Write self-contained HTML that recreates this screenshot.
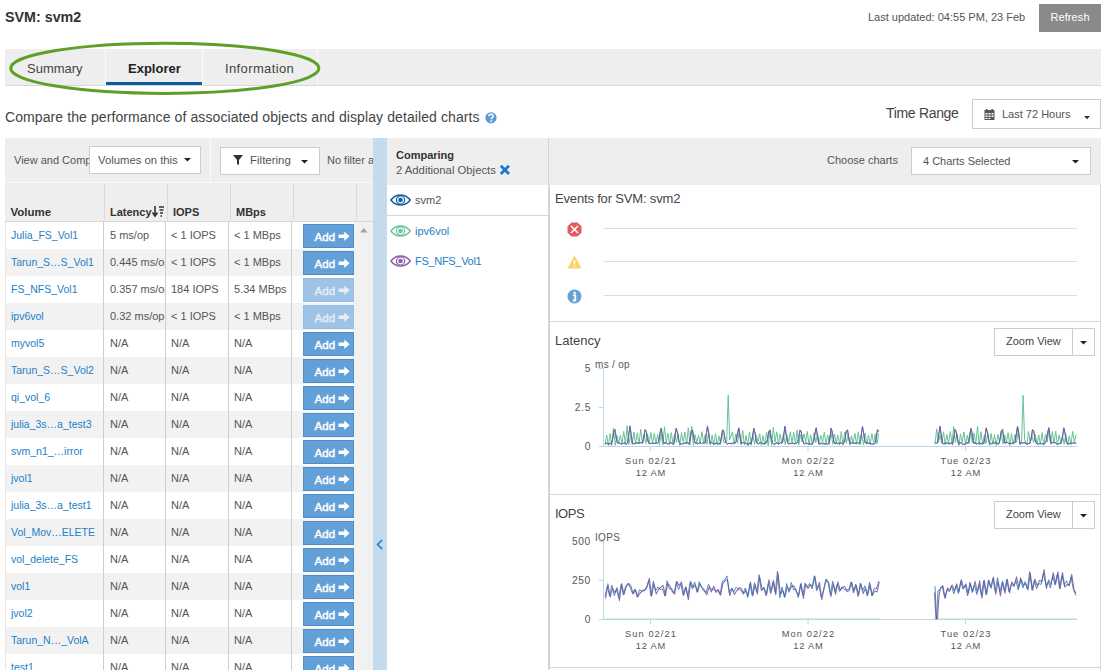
<!DOCTYPE html>
<html><head><meta charset="utf-8">
<style>
*{box-sizing:border-box;margin:0;padding:0}
html,body{width:1105px;height:670px;overflow:hidden;background:#fff;font-family:"Liberation Sans",sans-serif;color:#444;position:relative}
.a{position:absolute;white-space:nowrap}
.t{line-height:1}
.lk{color:#217fc6}
.btn{position:absolute;width:51px;height:24px;background:#62a0d7;border:1px solid #4f8dc8;color:#fff;font-size:11.5px;font-weight:normal;-webkit-text-stroke:0.45px #fff;line-height:25px;padding-left:10.5px;letter-spacing:0.1px}
.btn.d{background:#9fc3e6;border-color:#98bde2;color:#e3eef8;-webkit-text-stroke:0.45px #e3eef8}
.arr{position:absolute;left:33.5px;top:5.5px}
</style></head><body>

<div class="a t" style="left:5px;top:10px;font-size:14.3px;font-weight:bold;color:#333">SVM: svm2</div>
<div class="a t" style="left:868px;top:12px;font-size:11px;color:#555">Last updated: 04:55 PM, 23 Feb</div>
<div class="a" style="left:1039px;top:4px;width:62px;height:28px;background:#8a8a8a;color:#fff;font-size:11px;line-height:26px;text-align:center;letter-spacing:0.1px">Refresh</div>

<div class="a" style="left:5px;top:49px;width:1096px;height:37px;background:#eeeeee;border-bottom:1px solid #d8d8d8"></div>
<div class="a" style="left:105px;top:49px;width:1px;height:36px;background:#fafafa"></div>
<div class="a" style="left:202px;top:49px;width:1px;height:36px;background:#fafafa"></div>
<div class="a" style="left:317px;top:49px;width:1px;height:36px;background:#fafafa"></div>
<div class="a" style="left:106px;top:82px;width:96px;height:3px;background:#0d5c9e"></div>
<div class="a t" style="left:27px;top:62px;font-size:13px;color:#444">Summary</div>
<div class="a t" style="left:128px;top:62px;font-size:13px;font-weight:bold;color:#222">Explorer</div>
<div class="a t" style="left:225px;top:62px;font-size:13px;letter-spacing:0.38px;color:#444">Information</div>
<svg class="a" style="left:0;top:0;z-index:5" width="340" height="110"><ellipse cx="164.8" cy="68.3" rx="154.1" ry="25.1" fill="none" stroke="#5e9f28" stroke-width="3"/></svg>

<div class="a t" style="left:5px;top:110px;font-size:14px;letter-spacing:0.095px;color:#444">Compare the performance of associated objects and display detailed charts</div>
<svg class="a" style="left:484.5px;top:112px" width="12" height="12"><circle cx="6" cy="5.8" r="5.6" fill="#5b9bd5"/><path d="M3.9 4.3C3.9 2.9 4.8 2.2 6 2.2C7.3 2.2 8.1 3 8.1 4C8.1 5.4 6.3 5.5 6.3 7.2" fill="none" stroke="#fff" stroke-width="1.5"/><rect x="5.4" y="8.3" width="1.7" height="1.6" fill="#fff"/></svg>
<div class="a t" style="left:886px;top:105.5px;font-size:14px;letter-spacing:-0.32px;color:#444">Time Range</div>
<div class="a" style="left:972px;top:99px;width:129px;height:30px;border:1px solid #ccc;background:#fff"></div>
<svg class="a" style="left:984px;top:109px" width="11" height="11"><rect x="0.5" y="1" width="10" height="10" fill="#555"/><rect x="2" y="0" width="1.5" height="2" fill="#555"/><rect x="7.5" y="0" width="1.5" height="2" fill="#555"/><g fill="#fff"><rect x="1.5" y="4" width="2" height="1.5"/><rect x="4.5" y="4" width="2" height="1.5"/><rect x="7.5" y="4" width="2" height="1.5"/><rect x="1.5" y="6.5" width="2" height="1.5"/><rect x="4.5" y="6.5" width="2" height="1.5"/><rect x="7.5" y="6.5" width="2" height="1.5"/><rect x="1.5" y="9" width="2" height="1"/><rect x="4.5" y="9" width="2" height="1"/></g></svg>
<div class="a t" style="left:1002px;top:109px;font-size:11px;color:#555">Last 72 Hours</div>
<svg class="a" style="left:1083.5px;top:115.5px" width="6" height="4"><path d="M0 0H6L3 3.2Z" fill="#333"/></svg>

<div class="a" style="left:5px;top:138px;width:368px;height:45px;background:#eeeeee"></div>
<div class="a" style="left:210px;top:138px;width:1px;height:44px;background:#fafafa"></div>
<div class="a" style="left:5px;top:182px;width:368px;height:1px;background:#fafafa"></div>
<div class="a t" style="left:14px;top:155px;font-size:11px;color:#555;width:75px;overflow:hidden">View and Comp</div>
<div class="a" style="left:89px;top:146px;width:112px;height:28px;background:#fff;border:1px solid #ccc"></div>
<div class="a t" style="left:98px;top:155px;font-size:11.3px;color:#555;width:80px;overflow:hidden">Volumes on this</div>
<svg class="a" style="left:184px;top:158px" width="7" height="4"><path d="M0 0H7L3.5 3.5Z" fill="#222"/></svg>
<div class="a" style="left:220px;top:147px;width:100px;height:28px;background:#fff;border:1px solid #ccc"></div>
<svg class="a" style="left:233px;top:155px" width="10" height="10"><path d="M0 0H10L6 5V10L4 9V5Z" fill="#333"/></svg>
<div class="a t" style="left:250px;top:155px;font-size:11.5px;color:#555">Filtering</div>
<svg class="a" style="left:301px;top:160px" width="7" height="4"><path d="M0 0H7L3.5 3.5Z" fill="#222"/></svg>
<div class="a t" style="left:327px;top:155px;font-size:11px;color:#555;width:46px;overflow:hidden">No filter applied</div>

<div class="a" style="left:5px;top:183px;width:368px;height:39px;background:#eeeeee;border-bottom:1px solid #d6d6d6"></div>
<div class="a" style="left:104px;top:183px;width:1px;height:37px;background:#d9d9d9"></div>
<div class="a" style="left:167px;top:183px;width:1px;height:37px;background:#d9d9d9"></div>
<div class="a" style="left:230px;top:183px;width:1px;height:37px;background:#d9d9d9"></div>
<div class="a" style="left:293px;top:183px;width:1px;height:37px;background:#d9d9d9"></div>
<div class="a" style="left:356px;top:183px;width:1px;height:37px;background:#d9d9d9"></div>
<div class="a t" style="left:10.5px;top:207px;font-size:11.5px;font-weight:bold;color:#333">Volume</div>
<div class="a t" style="left:110px;top:207px;font-size:11px;font-weight:bold;color:#333">Latency</div>
<svg class="a" style="left:152px;top:206px" width="12" height="12"><path d="M3 0V9M0.5 6.5L3 10L5.5 6.5" stroke="#333" stroke-width="1.6" fill="none"/><path d="M7 1H12M7.5 4H11.5M8 7H11M8.5 10H10" stroke="#333" stroke-width="1.4"/></svg>
<div class="a t" style="left:173px;top:207px;font-size:11px;font-weight:bold;color:#333">IOPS</div>
<div class="a t" style="left:236px;top:207px;font-size:11px;font-weight:bold;color:#333">MBps</div>

<div class="a" style="left:354px;top:222px;width:19px;height:448px;background:#f1f1f1"></div>
<svg class="a" style="left:360px;top:228px" width="8" height="5"><path d="M0 4.5H7.5L3.75 0Z" fill="#a3a3a3"/></svg>
<div class="a" style="left:5px;top:222px;width:349px;height:27px;background:#ffffff"></div>
<div class="a t lk" style="left:11px;top:230px;font-size:10.5px">Julia_FS_Vol1</div>
<div class="a t" style="left:110px;top:230px;font-size:11px;color:#555;width:55px;overflow:hidden">5 ms/op</div>
<div class="a t" style="left:171px;top:230px;font-size:11px;color:#555">&lt; 1 IOPS</div>
<div class="a t" style="left:234px;top:230px;font-size:11px;color:#555">&lt; 1 MBps</div>
<div class="btn" style="left:303px;top:224px">Add<svg class="arr" width="12" height="10.5" viewBox="0 0 12 10"><path d="M0.5 3.3H6.3V0.3L11.6 5L6.3 9.7V6.7H0.5Z" fill="currentColor"/></svg></div>
<div class="a" style="left:5px;top:249px;width:349px;height:27px;background:#f2f2f2"></div>
<div class="a t lk" style="left:11px;top:257px;font-size:10.5px">Tarun_S…S_Vol1</div>
<div class="a t" style="left:110px;top:257px;font-size:11px;color:#555;width:55px;overflow:hidden">0.445 ms/op</div>
<div class="a t" style="left:171px;top:257px;font-size:11px;color:#555">&lt; 1 IOPS</div>
<div class="a t" style="left:234px;top:257px;font-size:11px;color:#555">&lt; 1 MBps</div>
<div class="btn" style="left:303px;top:251px">Add<svg class="arr" width="12" height="10.5" viewBox="0 0 12 10"><path d="M0.5 3.3H6.3V0.3L11.6 5L6.3 9.7V6.7H0.5Z" fill="currentColor"/></svg></div>
<div class="a" style="left:5px;top:276px;width:349px;height:27px;background:#ffffff"></div>
<div class="a t lk" style="left:11px;top:284px;font-size:10.5px">FS_NFS_Vol1</div>
<div class="a t" style="left:110px;top:284px;font-size:11px;color:#555;width:55px;overflow:hidden">0.357 ms/op</div>
<div class="a t" style="left:171px;top:284px;font-size:11px;color:#555">184 IOPS</div>
<div class="a t" style="left:234px;top:284px;font-size:11px;color:#555">5.34 MBps</div>
<div class="btn d" style="left:303px;top:278px">Add<svg class="arr" width="12" height="10.5" viewBox="0 0 12 10"><path d="M0.5 3.3H6.3V0.3L11.6 5L6.3 9.7V6.7H0.5Z" fill="currentColor"/></svg></div>
<div class="a" style="left:5px;top:303px;width:349px;height:27px;background:#f2f2f2"></div>
<div class="a t lk" style="left:11px;top:311px;font-size:10.5px">ipv6vol</div>
<div class="a t" style="left:110px;top:311px;font-size:11px;color:#555;width:55px;overflow:hidden">0.32 ms/op</div>
<div class="a t" style="left:171px;top:311px;font-size:11px;color:#555">&lt; 1 IOPS</div>
<div class="a t" style="left:234px;top:311px;font-size:11px;color:#555">&lt; 1 MBps</div>
<div class="btn d" style="left:303px;top:305px">Add<svg class="arr" width="12" height="10.5" viewBox="0 0 12 10"><path d="M0.5 3.3H6.3V0.3L11.6 5L6.3 9.7V6.7H0.5Z" fill="currentColor"/></svg></div>
<div class="a" style="left:5px;top:330px;width:349px;height:27px;background:#ffffff"></div>
<div class="a t lk" style="left:11px;top:338px;font-size:10.5px">myvol5</div>
<div class="a t" style="left:110px;top:338px;font-size:11px;color:#555;width:55px;overflow:hidden">N/A</div>
<div class="a t" style="left:171px;top:338px;font-size:11px;color:#555">N/A</div>
<div class="a t" style="left:234px;top:338px;font-size:11px;color:#555">N/A</div>
<div class="btn" style="left:303px;top:332px">Add<svg class="arr" width="12" height="10.5" viewBox="0 0 12 10"><path d="M0.5 3.3H6.3V0.3L11.6 5L6.3 9.7V6.7H0.5Z" fill="currentColor"/></svg></div>
<div class="a" style="left:5px;top:357px;width:349px;height:27px;background:#f2f2f2"></div>
<div class="a t lk" style="left:11px;top:365px;font-size:10.5px">Tarun_S…S_Vol2</div>
<div class="a t" style="left:110px;top:365px;font-size:11px;color:#555;width:55px;overflow:hidden">N/A</div>
<div class="a t" style="left:171px;top:365px;font-size:11px;color:#555">N/A</div>
<div class="a t" style="left:234px;top:365px;font-size:11px;color:#555">N/A</div>
<div class="btn" style="left:303px;top:359px">Add<svg class="arr" width="12" height="10.5" viewBox="0 0 12 10"><path d="M0.5 3.3H6.3V0.3L11.6 5L6.3 9.7V6.7H0.5Z" fill="currentColor"/></svg></div>
<div class="a" style="left:5px;top:384px;width:349px;height:27px;background:#ffffff"></div>
<div class="a t lk" style="left:11px;top:392px;font-size:10.5px">qi_vol_6</div>
<div class="a t" style="left:110px;top:392px;font-size:11px;color:#555;width:55px;overflow:hidden">N/A</div>
<div class="a t" style="left:171px;top:392px;font-size:11px;color:#555">N/A</div>
<div class="a t" style="left:234px;top:392px;font-size:11px;color:#555">N/A</div>
<div class="btn" style="left:303px;top:386px">Add<svg class="arr" width="12" height="10.5" viewBox="0 0 12 10"><path d="M0.5 3.3H6.3V0.3L11.6 5L6.3 9.7V6.7H0.5Z" fill="currentColor"/></svg></div>
<div class="a" style="left:5px;top:411px;width:349px;height:27px;background:#f2f2f2"></div>
<div class="a t lk" style="left:11px;top:419px;font-size:10.5px">julia_3s…a_test3</div>
<div class="a t" style="left:110px;top:419px;font-size:11px;color:#555;width:55px;overflow:hidden">N/A</div>
<div class="a t" style="left:171px;top:419px;font-size:11px;color:#555">N/A</div>
<div class="a t" style="left:234px;top:419px;font-size:11px;color:#555">N/A</div>
<div class="btn" style="left:303px;top:413px">Add<svg class="arr" width="12" height="10.5" viewBox="0 0 12 10"><path d="M0.5 3.3H6.3V0.3L11.6 5L6.3 9.7V6.7H0.5Z" fill="currentColor"/></svg></div>
<div class="a" style="left:5px;top:438px;width:349px;height:27px;background:#ffffff"></div>
<div class="a t lk" style="left:11px;top:446px;font-size:10.5px">svm_n1_…irror</div>
<div class="a t" style="left:110px;top:446px;font-size:11px;color:#555;width:55px;overflow:hidden">N/A</div>
<div class="a t" style="left:171px;top:446px;font-size:11px;color:#555">N/A</div>
<div class="a t" style="left:234px;top:446px;font-size:11px;color:#555">N/A</div>
<div class="btn" style="left:303px;top:440px">Add<svg class="arr" width="12" height="10.5" viewBox="0 0 12 10"><path d="M0.5 3.3H6.3V0.3L11.6 5L6.3 9.7V6.7H0.5Z" fill="currentColor"/></svg></div>
<div class="a" style="left:5px;top:465px;width:349px;height:27px;background:#f2f2f2"></div>
<div class="a t lk" style="left:11px;top:473px;font-size:10.5px">jvol1</div>
<div class="a t" style="left:110px;top:473px;font-size:11px;color:#555;width:55px;overflow:hidden">N/A</div>
<div class="a t" style="left:171px;top:473px;font-size:11px;color:#555">N/A</div>
<div class="a t" style="left:234px;top:473px;font-size:11px;color:#555">N/A</div>
<div class="btn" style="left:303px;top:467px">Add<svg class="arr" width="12" height="10.5" viewBox="0 0 12 10"><path d="M0.5 3.3H6.3V0.3L11.6 5L6.3 9.7V6.7H0.5Z" fill="currentColor"/></svg></div>
<div class="a" style="left:5px;top:492px;width:349px;height:27px;background:#ffffff"></div>
<div class="a t lk" style="left:11px;top:500px;font-size:10.5px">julia_3s…a_test1</div>
<div class="a t" style="left:110px;top:500px;font-size:11px;color:#555;width:55px;overflow:hidden">N/A</div>
<div class="a t" style="left:171px;top:500px;font-size:11px;color:#555">N/A</div>
<div class="a t" style="left:234px;top:500px;font-size:11px;color:#555">N/A</div>
<div class="btn" style="left:303px;top:494px">Add<svg class="arr" width="12" height="10.5" viewBox="0 0 12 10"><path d="M0.5 3.3H6.3V0.3L11.6 5L6.3 9.7V6.7H0.5Z" fill="currentColor"/></svg></div>
<div class="a" style="left:5px;top:519px;width:349px;height:27px;background:#f2f2f2"></div>
<div class="a t lk" style="left:11px;top:527px;font-size:10.5px">Vol_Mov…ELETE</div>
<div class="a t" style="left:110px;top:527px;font-size:11px;color:#555;width:55px;overflow:hidden">N/A</div>
<div class="a t" style="left:171px;top:527px;font-size:11px;color:#555">N/A</div>
<div class="a t" style="left:234px;top:527px;font-size:11px;color:#555">N/A</div>
<div class="btn" style="left:303px;top:521px">Add<svg class="arr" width="12" height="10.5" viewBox="0 0 12 10"><path d="M0.5 3.3H6.3V0.3L11.6 5L6.3 9.7V6.7H0.5Z" fill="currentColor"/></svg></div>
<div class="a" style="left:5px;top:546px;width:349px;height:27px;background:#ffffff"></div>
<div class="a t lk" style="left:11px;top:554px;font-size:10.5px">vol_delete_FS</div>
<div class="a t" style="left:110px;top:554px;font-size:11px;color:#555;width:55px;overflow:hidden">N/A</div>
<div class="a t" style="left:171px;top:554px;font-size:11px;color:#555">N/A</div>
<div class="a t" style="left:234px;top:554px;font-size:11px;color:#555">N/A</div>
<div class="btn" style="left:303px;top:548px">Add<svg class="arr" width="12" height="10.5" viewBox="0 0 12 10"><path d="M0.5 3.3H6.3V0.3L11.6 5L6.3 9.7V6.7H0.5Z" fill="currentColor"/></svg></div>
<div class="a" style="left:5px;top:573px;width:349px;height:27px;background:#f2f2f2"></div>
<div class="a t lk" style="left:11px;top:581px;font-size:10.5px">vol1</div>
<div class="a t" style="left:110px;top:581px;font-size:11px;color:#555;width:55px;overflow:hidden">N/A</div>
<div class="a t" style="left:171px;top:581px;font-size:11px;color:#555">N/A</div>
<div class="a t" style="left:234px;top:581px;font-size:11px;color:#555">N/A</div>
<div class="btn" style="left:303px;top:575px">Add<svg class="arr" width="12" height="10.5" viewBox="0 0 12 10"><path d="M0.5 3.3H6.3V0.3L11.6 5L6.3 9.7V6.7H0.5Z" fill="currentColor"/></svg></div>
<div class="a" style="left:5px;top:600px;width:349px;height:27px;background:#ffffff"></div>
<div class="a t lk" style="left:11px;top:608px;font-size:10.5px">jvol2</div>
<div class="a t" style="left:110px;top:608px;font-size:11px;color:#555;width:55px;overflow:hidden">N/A</div>
<div class="a t" style="left:171px;top:608px;font-size:11px;color:#555">N/A</div>
<div class="a t" style="left:234px;top:608px;font-size:11px;color:#555">N/A</div>
<div class="btn" style="left:303px;top:602px">Add<svg class="arr" width="12" height="10.5" viewBox="0 0 12 10"><path d="M0.5 3.3H6.3V0.3L11.6 5L6.3 9.7V6.7H0.5Z" fill="currentColor"/></svg></div>
<div class="a" style="left:5px;top:627px;width:349px;height:27px;background:#f2f2f2"></div>
<div class="a t lk" style="left:11px;top:635px;font-size:10.5px">Tarun_N…_VolA</div>
<div class="a t" style="left:110px;top:635px;font-size:11px;color:#555;width:55px;overflow:hidden">N/A</div>
<div class="a t" style="left:171px;top:635px;font-size:11px;color:#555">N/A</div>
<div class="a t" style="left:234px;top:635px;font-size:11px;color:#555">N/A</div>
<div class="btn" style="left:303px;top:629px">Add<svg class="arr" width="12" height="10.5" viewBox="0 0 12 10"><path d="M0.5 3.3H6.3V0.3L11.6 5L6.3 9.7V6.7H0.5Z" fill="currentColor"/></svg></div>
<div class="a" style="left:5px;top:654px;width:349px;height:27px;background:#ffffff"></div>
<div class="a t lk" style="left:11px;top:662px;font-size:10.5px">test1</div>
<div class="a t" style="left:110px;top:662px;font-size:11px;color:#555;width:55px;overflow:hidden">N/A</div>
<div class="a t" style="left:171px;top:662px;font-size:11px;color:#555">N/A</div>
<div class="a t" style="left:234px;top:662px;font-size:11px;color:#555">N/A</div>
<div class="btn" style="left:303px;top:656px">Add<svg class="arr" width="12" height="10.5" viewBox="0 0 12 10"><path d="M0.5 3.3H6.3V0.3L11.6 5L6.3 9.7V6.7H0.5Z" fill="currentColor"/></svg></div>
<div class="a" style="left:103px;top:222px;width:1px;height:448px;background:#cfcfcf"></div>
<div class="a" style="left:165px;top:222px;width:1px;height:448px;background:#cfcfcf"></div>
<div class="a" style="left:228px;top:222px;width:1px;height:448px;background:#cfcfcf"></div>
<div class="a" style="left:291px;top:222px;width:1px;height:448px;background:#cfcfcf"></div>
<div class="a" style="left:5px;top:222px;width:1px;height:448px;background:#e6e6e6"></div>
<div class="a" style="left:373px;top:138px;width:14px;height:532px;background:#c4dbed"></div>
<svg class="a" style="left:376px;top:539px" width="8" height="11"><path d="M6.2 1L1.6 5.5L6.2 10" stroke="#1f7fcc" stroke-width="1.7" fill="none"/></svg>

<div class="a" style="left:387px;top:138px;width:161px;height:47px;background:#eeeeee"></div>
<div class="a" style="left:548px;top:138px;width:2px;height:532px;background:#d4d4d4"></div>
<div class="a t" style="left:396px;top:150px;font-size:11px;font-weight:bold;color:#333">Comparing</div>
<div class="a t" style="left:396px;top:165px;font-size:11.3px;color:#555">2 Additional Objects</div>
<svg class="a" style="left:499px;top:164px" width="12" height="12"><path d="M1.8 1.8L10 10M10 1.8L1.8 10" stroke="#1a7ad0" stroke-width="2.9"/></svg>
<div class="a" style="left:387px;top:215px;width:161px;height:1px;background:#d6d6d6"></div>

<svg class="a" style="left:390px;top:194.3px" width="21.5" height="12" viewBox="0 0 21 12" preserveAspectRatio="none"><path d="M0.9 6C3.6 2.3 7 0.9 10.3 0.9S17 2.3 19.8 6C17 9.7 13.6 11.1 10.3 11.1S3.6 9.7 0.9 6Z" fill="none" stroke="#1a62a0" stroke-width="1.5"/><circle cx="10.3" cy="6" r="4.05" fill="none" stroke="#1a62a0" stroke-width="1.2"/><circle cx="10.3" cy="6" r="2.3" fill="#1a62a0"/></svg>
<div class="a t" style="left:415px;top:195px;font-size:11px;color:#555">svm2</div>
<svg class="a" style="left:390px;top:225.3px" width="21.5" height="12" viewBox="0 0 21 12" preserveAspectRatio="none"><path d="M0.9 6C3.6 2.3 7 0.9 10.3 0.9S17 2.3 19.8 6C17 9.7 13.6 11.1 10.3 11.1S3.6 9.7 0.9 6Z" fill="none" stroke="#6cc59b" stroke-width="1.5"/><circle cx="10.3" cy="6" r="4.05" fill="none" stroke="#6cc59b" stroke-width="1.2"/><circle cx="10.3" cy="6" r="2.3" fill="#6cc59b"/></svg>
<div class="a t lk" style="left:415px;top:226px;font-size:11px">ipv6vol</div>
<svg class="a" style="left:390px;top:255.3px" width="21.5" height="12" viewBox="0 0 21 12" preserveAspectRatio="none"><path d="M0.9 6C3.6 2.3 7 0.9 10.3 0.9S17 2.3 19.8 6C17 9.7 13.6 11.1 10.3 11.1S3.6 9.7 0.9 6Z" fill="none" stroke="#8e63a8" stroke-width="1.5"/><circle cx="10.3" cy="6" r="4.05" fill="none" stroke="#8e63a8" stroke-width="1.2"/><circle cx="10.3" cy="6" r="2.3" fill="#8e63a8"/></svg>
<div class="a t lk" style="left:415px;top:256px;font-size:11px;letter-spacing:-0.3px">FS_NFS_Vol1</div>
<div class="a" style="left:549px;top:138px;width:552px;height:47px;background:#eeeeee"></div>
<div class="a" style="left:1100px;top:185px;width:1px;height:485px;background:#d6d6d6"></div>
<div class="a t" style="left:827px;top:155px;font-size:11px;color:#555">Choose charts</div>
<div class="a" style="left:911px;top:147px;width:180px;height:28px;background:#fff;border:1px solid #ccc"></div>
<div class="a t" style="left:923px;top:156px;font-size:11px;color:#555">4 Charts Selected</div>
<svg class="a" style="left:1072px;top:160px" width="7" height="4"><path d="M0 0H7L3.5 3.5Z" fill="#222"/></svg>
<div class="a t" style="left:555px;top:191.5px;font-size:13px;letter-spacing:-0.17px;color:#444">Events for SVM: svm2</div>
<div class="a" style="left:549px;top:321px;width:551px;height:1px;background:#d6d6d6"></div>
<div class="a" style="left:549px;top:494px;width:551px;height:1px;background:#d6d6d6"></div>
<div class="a" style="left:549px;top:667px;width:551px;height:1px;background:#d6d6d6"></div>

<div class="a" style="left:604px;top:228px;width:473px;height:1px;background:#dedede"></div>
<div class="a" style="left:604px;top:261px;width:473px;height:1px;background:#dedede"></div>
<div class="a" style="left:604px;top:295px;width:473px;height:1px;background:#dedede"></div>
<svg class="a" style="left:566.5px;top:221.5px" width="15" height="15" viewBox="0 0 15 15"><path d="M4.4 0.5H10.6L14.5 4.4V10.6L10.6 14.5H4.4L0.5 10.6V4.4Z" fill="#e05c60"/><path d="M4 4L11 11M11 4L4 11" stroke="#fff" stroke-width="1.5"/></svg>
<svg class="a" style="left:566.5px;top:254.5px" width="15" height="14" viewBox="0 0 15 14"><path d="M7.5 0.5L14.5 13.5H0.5Z" fill="#f7d36b"/><path d="M7.5 5V9.5M7.5 10.8V12" stroke="#fff" stroke-width="1.6"/></svg>
<svg class="a" style="left:566.5px;top:288.5px" width="15" height="15" viewBox="0 0 15 15"><circle cx="7.5" cy="7.5" r="7" fill="#64a2d8"/><path d="M6 6.3H8.3V11.2M5.8 11.5H9.2" stroke="#fff" stroke-width="1.8" fill="none"/><circle cx="7.6" cy="3.9" r="1.2" fill="#fff"/></svg>

<svg class="a" style="left:0;top:0" width="1105" height="670">
<line x1="603.5" y1="368" x2="603.5" y2="446" stroke="#bcd6ea" stroke-width="1"/>
<line x1="599" y1="368.5" x2="604" y2="368.5" stroke="#bcd6ea" stroke-width="1"/>
<text x="591" y="371.7" font-size="10.2" fill="#555" text-anchor="end" letter-spacing="0.7" font-family="Liberation Sans" >5</text>
<line x1="599" y1="407.5" x2="604" y2="407.5" stroke="#bcd6ea" stroke-width="1"/>
<text x="591" y="410.7" font-size="10.2" fill="#555" text-anchor="end" letter-spacing="0.7" font-family="Liberation Sans" >2.5</text>
<line x1="599" y1="446.5" x2="604" y2="446.5" stroke="#bcd6ea" stroke-width="1"/>
<text x="591" y="449.7" font-size="10.2" fill="#555" text-anchor="end" letter-spacing="0.7" font-family="Liberation Sans" >0</text>
<text x="595" y="367.5" font-size="10" fill="#555" text-anchor="start" letter-spacing="0.3" font-family="Liberation Sans" >ms / op</text>
<line x1="599" y1="446.5" x2="1077" y2="446.5" stroke="#bcd6ea" stroke-width="1"/>
<line x1="650.5" y1="446" x2="650.5" y2="451" stroke="#bcd6ea" stroke-width="1"/>
<text x="651.0" y="463.8" font-size="9.3" fill="#555" text-anchor="middle" letter-spacing="1.05" font-family="Liberation Sans" >Sun 02/21</text>
<text x="650.9" y="475.6" font-size="9.3" fill="#555" text-anchor="middle" letter-spacing="0.8" font-family="Liberation Sans" >12 AM</text>
<line x1="808" y1="446" x2="808" y2="451" stroke="#bcd6ea" stroke-width="1"/>
<text x="808.5" y="463.8" font-size="9.3" fill="#555" text-anchor="middle" letter-spacing="1.05" font-family="Liberation Sans" >Mon 02/22</text>
<text x="808.4" y="475.6" font-size="9.3" fill="#555" text-anchor="middle" letter-spacing="0.8" font-family="Liberation Sans" >12 AM</text>
<line x1="965.5" y1="446" x2="965.5" y2="451" stroke="#bcd6ea" stroke-width="1"/>
<text x="966.0" y="463.8" font-size="9.3" fill="#555" text-anchor="middle" letter-spacing="1.05" font-family="Liberation Sans" >Tue 02/23</text>
<text x="965.9" y="475.6" font-size="9.3" fill="#555" text-anchor="middle" letter-spacing="0.8" font-family="Liberation Sans" >12 AM</text>
<polyline points="605.0,444.5 606.7,435.2 608.4,445.4 610.1,433.4 611.8,445.5 613.5,428.0 615.2,445.4 616.9,435.4 618.6,442.7 620.3,435.3 622.0,443.4 623.7,431.4 625.4,444.3 627.1,425.7 628.8,444.6 630.5,435.2 632.2,444.6 633.9,432.0 635.6,443.6 637.3,432.9 639.0,443.7 640.7,429.3 642.4,443.2 644.1,433.9 645.8,443.6 647.5,433.7 649.2,442.8 650.9,432.6 652.6,443.6 654.3,433.4 656.0,443.1 657.7,434.5 659.4,445.3 661.1,433.9 662.8,445.1 664.5,426.8 666.2,442.9 667.9,433.2 669.6,444.6 671.3,432.6 673.0,443.6 674.7,433.7 676.4,442.3 678.1,433.6 679.8,445.5 681.5,432.6 683.2,442.1 684.9,432.0 686.6,444.3 688.3,427.9 690.0,445.1 691.7,426.2 693.4,445.2 695.1,434.7 696.8,442.6 698.5,435.5 700.2,443.7 701.9,431.7 703.6,442.6 705.3,434.6 707.0,444.4 708.7,431.7 710.4,445.1 712.1,435.0 713.8,444.9 715.5,433.6 717.2,444.7 718.9,435.8 720.6,444.4 722.3,433.2 724.0,443.2 726.7,441.3 728.2,395.3 729.7,439.8 732.5,431.8 734.2,444.3 735.9,434.0 737.6,443.4 739.3,429.3 741.0,445.1 742.7,430.4 744.4,445.1 746.1,435.4 747.8,445.6 749.5,431.8 751.2,445.2 752.9,434.7 754.6,444.4 756.3,435.3 758.0,442.1 759.7,433.7 761.4,445.4 763.1,435.4 764.8,444.7 766.5,432.0 768.2,445.6 769.9,431.4 771.6,445.2 773.3,427.5 775.0,442.2 776.7,431.8 778.4,444.8 780.1,434.1 781.8,442.9 783.5,433.4 785.2,444.5 786.9,434.8 788.6,442.2 790.3,431.9 792.0,442.8 793.7,432.4 795.4,443.8 797.1,430.2 798.8,444.7 800.5,434.6 802.2,442.3 803.9,433.8 805.6,442.1 807.3,431.4 809.0,444.9 810.7,434.8 812.4,445.0 814.1,432.9 815.8,442.7 817.5,433.6 819.2,442.8 820.9,435.5 822.6,442.4 824.3,432.2 826.0,444.0 827.7,435.0 829.4,444.5 831.1,432.1 832.8,444.3 834.5,434.0 836.2,443.1 837.9,435.1 839.6,445.1 841.3,431.6 843.0,445.2 844.7,432.0 846.4,443.3 848.1,434.2 849.8,445.2 851.5,435.8 853.2,443.4 854.9,433.4 856.6,444.1 858.3,431.8 860.0,444.9 861.7,434.7 863.4,444.8 865.1,433.1 866.8,444.2 868.5,435.2 870.2,444.4 871.9,433.7 873.6,442.4 875.3,433.9 877.0,443.9 878.7,433.4" fill="none" stroke="#66c396" stroke-width="1.0" stroke-opacity="1" stroke-linejoin="round"/>
<polyline points="935.0,444.3 936.7,428.9 938.4,442.2 940.1,435.3 941.8,443.4 943.5,431.8 945.2,444.7 946.9,434.7 948.6,444.1 950.3,431.4 952.0,442.6 953.7,426.5 955.4,442.5 957.1,433.6 958.8,445.7 960.5,434.0 962.2,442.7 963.9,431.9 965.6,444.8 967.3,435.3 969.0,443.8 970.7,432.7 972.4,443.1 974.1,432.8 975.8,444.0 977.5,426.1 979.2,444.9 980.9,431.6 982.6,444.6 984.3,435.3 986.0,443.4 987.7,432.6 989.4,445.4 991.1,433.4 992.8,444.3 994.5,434.8 996.2,445.7 997.9,434.4 999.6,442.2 1001.3,432.8 1003.0,444.0 1004.7,434.8 1006.4,442.2 1008.1,432.6 1009.8,445.6 1011.5,433.5 1013.2,444.2 1014.9,434.7 1016.6,442.4 1018.3,428.6 1020.0,444.2 1021.6,441.3 1023.1,395.3 1024.6,439.8 1026.8,445.0 1028.5,431.3 1030.2,442.7 1031.9,434.8 1033.6,443.0 1035.3,434.5 1037.0,443.9 1038.7,435.0 1040.4,444.2 1042.1,432.7 1043.8,445.2 1045.5,434.0 1047.2,442.2 1048.9,430.1 1050.6,444.3 1052.3,431.7 1054.0,443.1 1055.7,431.2 1057.4,444.5 1059.1,435.0 1060.8,443.0 1062.5,435.7 1064.2,444.3 1065.9,434.1 1067.6,445.1 1069.3,435.8 1071.0,444.4 1072.7,431.4 1074.4,442.2 1076.1,434.9" fill="none" stroke="#66c396" stroke-width="1.0" stroke-opacity="1" stroke-linejoin="round"/>
<polyline points="605.0,443.7 606.2,442.9 607.5,443.2 608.8,444.7 610.0,443.5 611.2,444.1 612.5,439.3 613.8,431.0 615.0,429.4 616.2,437.9 617.5,442.8 618.8,442.9 620.0,442.9 621.2,444.4 622.5,444.1 623.8,443.3 625.0,442.5 626.2,444.7 627.5,442.6 628.8,434.5 630.0,425.7 631.2,434.5 632.5,443.2 633.8,443.7 635.0,443.2 636.2,442.9 637.5,442.5 638.8,442.9 640.0,442.3 641.2,442.5 642.5,442.7 643.8,437.2 645.0,429.5 646.2,431.0 647.5,439.7 648.8,443.2 650.0,443.7 651.2,443.6 652.5,443.4 653.8,444.0 655.0,443.1 656.2,443.1 657.5,443.4 658.8,440.7 660.0,433.4 661.2,428.4 662.5,435.6 663.8,443.6 665.0,443.4 666.2,442.9 667.5,444.1 668.8,443.8 670.0,442.1 671.2,442.9 672.5,443.9 673.8,444.5 675.0,436.8 676.2,428.7 677.5,433.2 678.8,441.9 680.0,443.7 681.2,444.3 682.5,443.3 683.8,443.3 685.0,442.5 686.2,442.7 687.5,442.1 688.8,444.4 690.0,439.7 691.2,431.6 692.5,430.0 693.8,438.3 695.0,443.0 696.2,442.3 697.5,444.4 698.8,443.1 700.0,442.6 701.2,443.8 702.5,442.9 703.8,442.8 705.0,443.3 706.2,434.3 707.5,425.8 708.8,434.3 710.0,443.7 711.2,442.1 712.5,443.2 713.8,444.6 715.0,443.4 716.2,443.1 717.5,443.6 718.8,444.1 720.0,444.1 721.2,438.2 722.5,430.0 723.8,430.7 725.0,439.0 726.2,442.6 727.5,444.5 728.8,443.0 730.0,443.5 731.2,443.3 732.5,442.9 733.8,442.8 735.0,443.6 736.2,441.5 737.5,433.3 738.8,427.8 740.0,436.4 741.2,444.0 742.5,442.5 743.8,442.3 745.0,443.2 746.2,443.5 747.5,444.5 748.8,444.8 750.0,442.1 751.2,443.6 752.5,436.8 753.8,428.9 755.0,433.0 756.2,440.9 757.5,443.5 758.8,444.2 760.0,442.2 761.2,443.0 762.5,443.2 763.8,443.9 765.0,443.4 766.2,442.7 767.5,440.1 768.8,431.4 770.0,430.4 771.2,438.3 772.5,442.6 773.8,444.6 775.0,444.0 776.2,442.3 777.5,442.7 778.8,444.0 780.0,442.6 781.2,442.8 782.5,442.3 783.8,434.4 785.0,426.2 786.2,435.2 787.5,442.1 788.8,444.4 790.0,443.3 791.2,443.4 792.5,443.5 793.8,443.8 795.0,444.2 796.2,442.9 797.5,442.5 798.8,437.8 800.0,430.6 801.2,431.6 802.5,439.4 803.8,443.6 805.0,443.6 806.2,442.6 807.5,443.1 808.8,444.5 810.0,443.5 811.2,444.7 812.5,443.4 813.8,440.9 815.0,433.1 816.2,427.6 817.5,436.1 818.8,444.4 820.0,444.3 821.2,443.4 822.5,443.9 823.8,444.0 825.0,444.6 826.2,443.7 827.5,444.5 828.8,443.0 830.0,436.7 831.2,428.1 832.5,433.5 833.8,441.5 835.0,443.8 836.2,442.3 837.5,444.0 838.8,443.2 840.0,443.3 841.2,442.4 842.5,443.6 843.8,443.2 845.0,440.4 846.2,431.0 847.5,430.0 848.8,437.6 850.0,443.5 851.2,443.2 852.5,442.3 853.8,443.0 855.0,442.9 856.2,443.7 857.5,442.6 858.8,443.1 860.0,443.5 861.2,435.5 862.5,426.4 863.8,434.1 865.0,442.3 866.2,442.4 867.5,442.9 868.8,442.8 870.0,443.2 871.2,443.7 872.5,444.0 873.8,444.6 875.0,443.4 876.2,437.8 877.5,429.6 878.8,431.5" fill="none" stroke="#2b62a6" stroke-width="1.0" stroke-opacity="0.7" stroke-linejoin="round"/>
<polyline points="935.0,442.2 936.2,443.4 937.5,442.6 938.8,434.8 940.0,426.3 941.2,435.1 942.5,443.0 943.8,443.6 945.0,443.0 946.2,443.0 947.5,443.3 948.8,444.0 950.0,443.3 951.2,442.6 952.5,444.9 953.8,438.0 955.0,429.3 956.2,431.9 957.5,439.8 958.8,444.3 960.0,442.2 961.2,442.9 962.5,444.6 963.8,444.6 965.0,444.7 966.2,442.0 967.5,443.4 968.8,440.6 970.0,432.6 971.2,428.9 972.5,436.5 973.8,443.7 975.0,442.5 976.2,444.2 977.5,443.6 978.8,442.2 980.0,443.6 981.2,444.4 982.5,442.4 983.8,443.8 985.0,436.5 986.2,427.7 987.5,432.8 988.8,440.7 990.0,443.2 991.2,443.7 992.5,443.1 993.8,442.9 995.0,442.7 996.2,441.9 997.5,443.8 998.8,444.0 1000.0,439.1 1001.2,431.1 1002.5,429.3 1003.8,438.4 1005.0,443.5 1006.2,441.9 1007.5,442.0 1008.8,443.4 1010.0,443.8 1011.2,443.7 1012.5,442.7 1013.8,442.1 1015.0,443.2 1016.2,434.5 1017.5,426.2 1018.8,434.4 1020.0,444.6 1021.2,442.6 1022.5,443.1 1023.8,442.6 1025.0,442.8 1026.2,443.8 1027.5,444.4 1028.8,443.4 1030.0,443.1 1031.2,438.3 1032.5,429.3 1033.8,430.6 1035.0,440.2 1036.2,442.8 1037.5,444.5 1038.8,443.7 1040.0,443.6 1041.2,443.7 1042.5,443.5 1043.8,443.3 1045.0,443.3 1046.2,441.5 1047.5,433.7 1048.8,427.5 1050.0,436.5 1051.2,443.4 1052.5,442.6 1053.8,442.2 1055.0,442.2 1056.2,443.7 1057.5,444.7 1058.8,443.4 1060.0,443.3 1061.2,443.5 1062.5,437.1 1063.8,427.7 1065.0,432.5 1066.2,442.0 1067.5,444.2 1068.8,443.7 1070.0,442.8 1071.2,443.8 1072.5,442.9 1073.8,443.6 1075.0,443.0 1076.2,443.6" fill="none" stroke="#2b62a6" stroke-width="1.0" stroke-opacity="0.7" stroke-linejoin="round"/>
<polyline points="605.0,444.1 606.2,443.4 607.5,443.8 608.8,444.1 610.0,442.9 611.2,443.9 612.5,439.6 613.8,431.4 615.0,429.8 616.2,438.0 617.5,443.4 618.8,443.0 620.0,443.3 621.2,443.6 622.5,443.3 623.8,443.3 625.0,442.9 626.2,444.0 627.5,442.9 628.8,434.7 630.0,426.5 631.2,434.7 632.5,443.3 633.8,443.7 635.0,443.7 636.2,442.9 637.5,443.3 638.8,443.3 640.0,442.9 641.2,442.7 642.5,443.4 643.8,438.0 645.0,429.8 646.2,431.4 647.5,439.6 648.8,443.2 650.0,443.3 651.2,443.3 652.5,443.0 653.8,443.4 655.0,443.3 656.2,443.4 657.5,442.7 658.8,441.2 660.0,433.1 661.2,428.1 662.5,436.3 663.8,443.0 665.0,442.8 666.2,442.7 667.5,443.7 668.8,443.3 670.0,442.7 671.2,442.8 672.5,443.9 673.8,443.9 675.0,436.3 676.2,428.1 677.5,433.1 678.8,441.2 680.0,443.4 681.2,444.0 682.5,443.8 683.8,444.0 685.0,443.1 686.2,442.9 687.5,442.7 688.8,443.9 690.0,439.6 691.2,431.4 692.5,429.8 693.8,438.0 695.0,443.0 696.2,443.1 697.5,443.9 698.8,442.8 700.0,442.6 701.2,443.8 702.5,442.6 703.8,443.5 705.0,442.9 706.2,434.7 707.5,426.5 708.8,434.7 710.0,443.4 711.2,442.6 712.5,442.8 713.8,443.9 715.0,443.5 716.2,443.3 717.5,443.6 718.8,443.8 720.0,443.6 721.2,438.0 722.5,429.8 723.8,431.4 725.0,439.6 726.2,443.0 727.5,444.1 728.8,443.3 730.0,443.4 731.2,444.1 732.5,443.6 733.8,443.2 735.0,443.3 736.2,441.2 737.5,433.1 738.8,428.1 740.0,436.3 741.2,444.0 742.5,442.6 743.8,442.9 745.0,442.6 746.2,444.0 747.5,443.7 748.8,444.1 750.0,442.9 751.2,443.7 752.5,436.3 753.8,428.1 755.0,433.1 756.2,441.2 757.5,443.9 758.8,443.5 760.0,442.7 761.2,442.9 762.5,443.7 763.8,443.9 765.0,442.7 766.2,443.2 767.5,439.6 768.8,431.4 770.0,429.8 771.2,438.0 772.5,443.0 773.8,444.0 775.0,444.0 776.2,443.1 777.5,443.5 778.8,444.0 780.0,442.7 781.2,443.1 782.5,442.9 783.8,434.7 785.0,426.5 786.2,434.7 787.5,442.9 788.8,444.0 790.0,442.8 791.2,444.0 792.5,442.8 793.8,443.4 795.0,443.6 796.2,443.3 797.5,442.7 798.8,438.0 800.0,429.8 801.2,431.4 802.5,439.6 803.8,443.7 805.0,443.9 806.2,443.3 807.5,443.8 808.8,444.0 810.0,443.9 811.2,444.0 812.5,443.8 813.8,441.2 815.0,433.1 816.2,428.1 817.5,436.3 818.8,443.6 820.0,443.7 821.2,442.9 822.5,443.7 823.8,443.3 825.0,443.9 826.2,443.6 827.5,444.1 828.8,443.7 830.0,436.3 831.2,428.1 832.5,433.1 833.8,441.2 835.0,444.1 836.2,443.0 837.5,443.3 838.8,443.8 840.0,443.4 841.2,442.7 842.5,444.0 843.8,442.9 845.0,439.6 846.2,431.4 847.5,429.8 848.8,438.0 850.0,443.5 851.2,443.4 852.5,442.8 853.8,443.5 855.0,443.3 856.2,443.1 857.5,442.6 858.8,443.6 860.0,442.9 861.2,434.7 862.5,426.5 863.8,434.7 865.0,442.8 866.2,443.0 867.5,443.1 868.8,443.5 870.0,443.6 871.2,444.0 872.5,443.9 873.8,444.0 875.0,443.0 876.2,438.0 877.5,429.8 878.8,431.4" fill="none" stroke="#74609e" stroke-width="1.0" stroke-opacity="1" stroke-linejoin="round"/>
<polyline points="935.0,442.8 936.2,442.8 937.5,442.9 938.8,434.7 940.0,426.5 941.2,434.7 942.5,443.5 943.8,444.1 945.0,443.4 946.2,443.5 947.5,442.7 948.8,443.8 950.0,443.6 951.2,442.7 952.5,444.1 953.8,438.0 955.0,429.8 956.2,431.4 957.5,439.6 958.8,443.5 960.0,442.9 961.2,442.9 962.5,444.1 963.8,444.1 965.0,444.0 966.2,442.7 967.5,443.7 968.8,441.2 970.0,433.1 971.2,428.1 972.5,436.3 973.8,443.0 975.0,442.7 976.2,443.6 977.5,443.7 978.8,442.6 980.0,443.2 981.2,443.7 982.5,443.0 983.8,443.6 985.0,436.3 986.2,428.1 987.5,433.1 988.8,441.2 990.0,443.7 991.2,444.1 992.5,442.9 993.8,442.7 995.0,443.1 996.2,442.7 997.5,444.1 998.8,443.8 1000.0,439.6 1001.2,431.4 1002.5,429.8 1003.8,438.0 1005.0,443.4 1006.2,442.6 1007.5,442.6 1008.8,443.5 1010.0,443.7 1011.2,443.5 1012.5,443.4 1013.8,442.7 1015.0,442.9 1016.2,434.7 1017.5,426.5 1018.8,434.7 1020.0,443.8 1021.2,442.9 1022.5,443.0 1023.8,442.8 1025.0,442.9 1026.2,443.2 1027.5,443.6 1028.8,443.6 1030.0,443.6 1031.2,438.0 1032.5,429.8 1033.8,431.4 1035.0,439.6 1036.2,442.9 1037.5,444.0 1038.8,443.8 1040.0,443.0 1041.2,443.7 1042.5,444.0 1043.8,444.1 1045.0,443.3 1046.2,441.2 1047.5,433.1 1048.8,428.1 1050.0,436.3 1051.2,443.6 1052.5,442.6 1053.8,442.7 1055.0,442.6 1056.2,443.7 1057.5,444.0 1058.8,444.0 1060.0,443.4 1061.2,443.0 1062.5,436.3 1063.8,428.1 1065.0,433.1 1066.2,441.2 1067.5,443.4 1068.8,443.8 1070.0,443.5 1071.2,443.2 1072.5,443.1 1073.8,443.0 1075.0,442.8 1076.2,443.1" fill="none" stroke="#74609e" stroke-width="1.0" stroke-opacity="1" stroke-linejoin="round"/>
<line x1="603.5" y1="541" x2="603.5" y2="619" stroke="#bcd6ea" stroke-width="1"/>
<line x1="599" y1="541.5" x2="604" y2="541.5" stroke="#bcd6ea" stroke-width="1"/>
<text x="591" y="544.7" font-size="10.2" fill="#555" text-anchor="end" letter-spacing="0.7" font-family="Liberation Sans" >500</text>
<line x1="599" y1="580.5" x2="604" y2="580.5" stroke="#bcd6ea" stroke-width="1"/>
<text x="591" y="583.7" font-size="10.2" fill="#555" text-anchor="end" letter-spacing="0.7" font-family="Liberation Sans" >250</text>
<line x1="599" y1="619.5" x2="604" y2="619.5" stroke="#bcd6ea" stroke-width="1"/>
<text x="591" y="622.7" font-size="10.2" fill="#555" text-anchor="end" letter-spacing="0.7" font-family="Liberation Sans" >0</text>
<text x="595" y="540.5" font-size="10" fill="#555" text-anchor="start" letter-spacing="0.3" font-family="Liberation Sans" >IOPS</text>
<line x1="599" y1="619.5" x2="1077" y2="619.5" stroke="#bcd6ea" stroke-width="1"/>
<line x1="650.5" y1="619" x2="650.5" y2="624" stroke="#bcd6ea" stroke-width="1"/>
<text x="651.0" y="636.8" font-size="9.3" fill="#555" text-anchor="middle" letter-spacing="1.05" font-family="Liberation Sans" >Sun 02/21</text>
<text x="650.9" y="648.6" font-size="9.3" fill="#555" text-anchor="middle" letter-spacing="0.8" font-family="Liberation Sans" >12 AM</text>
<line x1="808" y1="619" x2="808" y2="624" stroke="#bcd6ea" stroke-width="1"/>
<text x="808.5" y="636.8" font-size="9.3" fill="#555" text-anchor="middle" letter-spacing="1.05" font-family="Liberation Sans" >Mon 02/22</text>
<text x="808.4" y="648.6" font-size="9.3" fill="#555" text-anchor="middle" letter-spacing="0.8" font-family="Liberation Sans" >12 AM</text>
<line x1="965.5" y1="619" x2="965.5" y2="624" stroke="#bcd6ea" stroke-width="1"/>
<text x="966.0" y="636.8" font-size="9.3" fill="#555" text-anchor="middle" letter-spacing="1.05" font-family="Liberation Sans" >Tue 02/23</text>
<text x="965.9" y="648.6" font-size="9.3" fill="#555" text-anchor="middle" letter-spacing="0.8" font-family="Liberation Sans" >12 AM</text>
<line x1="604" y1="619" x2="880" y2="619" stroke="#b5e0cb" stroke-width="1"/>
<line x1="934" y1="619" x2="1077" y2="619" stroke="#b5e0cb" stroke-width="1"/>
<polyline points="605.6,598.6 607.9,583.8 610.2,597.0 612.5,588.2 614.8,592.5 617.1,587.7 619.4,600.6 621.7,583.5 624.0,594.4 626.3,586.6 628.6,583.4 630.9,585.8 633.2,593.9 635.5,589.7 637.8,597.0 640.1,593.0 642.4,591.0 644.7,590.6 647.0,586.3 649.3,578.4 651.6,596.2 653.9,583.8 656.2,593.9 658.5,589.5 660.8,587.1 663.1,585.5 665.4,595.9 667.7,583.4 670.0,586.1 672.3,591.6 674.6,594.1 676.9,581.3 679.2,585.8 681.5,581.9 683.8,594.9 686.1,587.2 688.4,599.8 690.7,581.4 693.0,587.5 695.3,585.0 697.6,592.1 699.9,583.9 702.2,588.3 704.5,591.3 706.8,594.8 709.1,587.1 711.4,591.9 713.7,586.3 716.0,592.5 718.3,589.5 720.6,595.1 722.9,583.3 725.2,580.6 727.5,579.7 729.8,595.6 732.1,588.2 734.4,594.5 736.7,590.8 739.0,587.9 741.3,588.2 743.6,594.0 745.9,590.1 748.2,595.6 750.5,582.0 752.8,595.9 755.1,584.6 757.4,594.1 759.7,576.8 762.0,589.1 764.3,588.4 766.6,594.7 768.9,579.9 771.2,592.0 773.5,580.4 775.8,594.8 778.1,573.9 780.4,594.3 782.7,590.6 785.0,596.5 787.3,587.0 789.6,589.9 791.9,585.9 794.2,586.4 796.5,592.2 798.8,595.2 801.1,583.2 803.4,598.4 805.7,584.5 808.0,588.6 810.3,584.8 812.6,586.2 814.9,576.3 817.2,589.1 819.5,582.3 821.8,599.7 824.1,588.1 826.4,579.6 828.7,582.7 831.0,596.6 833.3,583.5 835.6,594.4 837.9,581.9 840.2,590.4 842.5,587.6 844.8,586.6 847.1,591.8 849.4,590.4 851.7,582.2 854.0,591.0 856.3,585.4 858.6,595.2 860.9,583.7 863.2,593.6 865.5,587.9 867.8,594.6 870.1,584.9 872.4,595.4 874.7,591.1 877.0,591.9 879.3,582.0" fill="none" stroke="#9a6aa8" stroke-width="1.1" stroke-opacity="1" stroke-linejoin="round"/>
<polyline points="934.5,592.5 936.0,619.0 937.5,619.0 939.0,595.6 940.6,587.7 942.9,585.6 945.2,598.3 947.5,587.9 949.8,590.6 952.1,585.0 954.4,590.8 956.7,583.8 959.0,591.8 961.3,579.7 963.6,588.1 965.9,583.9 968.2,593.7 970.5,584.1 972.8,591.6 975.1,581.4 977.4,592.3 979.7,580.9 982.0,598.2 984.3,580.4 986.6,594.3 988.9,579.8 991.2,588.2 993.5,577.0 995.8,594.2 998.1,581.2 1000.4,595.8 1002.7,581.2 1005.0,593.1 1007.3,579.2 1009.6,592.8 1011.9,581.9 1014.2,586.3 1016.5,576.8 1018.8,587.5 1021.1,579.3 1023.4,585.3 1025.7,583.6 1028.0,589.8 1030.3,573.3 1032.6,590.3 1034.9,579.2 1037.2,585.9 1039.5,580.4 1041.8,581.8 1044.1,569.6 1046.4,588.4 1048.7,580.0 1051.0,584.7 1053.3,572.7 1055.6,583.8 1057.9,571.8 1060.2,588.4 1062.5,572.6 1064.8,587.1 1067.1,584.4 1069.4,585.6 1071.7,574.4 1074.0,589.7 1076.0,593.3" fill="none" stroke="#9a6aa8" stroke-width="1.1" stroke-opacity="1" stroke-linejoin="round"/>
<polyline points="605.0,596.4 607.3,586.4 609.6,596.2 611.9,585.3 614.2,595.6 616.5,589.8 618.8,597.6 621.1,584.5 623.4,595.1 625.7,586.2 628.0,583.4 630.3,587.9 632.6,593.7 634.9,589.1 637.2,597.1 639.5,589.8 641.8,591.1 644.1,589.6 646.4,589.0 648.7,580.8 651.0,596.1 653.3,581.2 655.6,590.6 657.9,586.9 660.2,589.5 662.5,588.8 664.8,596.0 667.1,580.8 669.4,589.2 671.7,588.6 674.0,593.0 676.3,582.0 678.6,589.7 680.9,584.2 683.2,595.5 685.5,586.8 687.8,596.3 690.1,582.5 692.4,588.7 694.7,582.2 697.0,592.2 699.3,581.8 701.6,587.1 703.9,589.1 706.2,592.5 708.5,584.3 710.8,589.2 713.1,589.2 715.4,590.6 717.7,590.0 720.0,594.7 722.3,581.4 724.6,579.8 726.9,575.9 729.2,592.8 731.5,588.3 733.8,591.9 736.1,587.2 738.4,589.6 740.7,590.1 743.0,593.6 745.3,588.0 747.6,597.6 749.9,583.6 752.2,595.5 754.5,582.8 756.8,591.9 759.1,574.8 761.4,591.0 763.7,587.1 766.0,595.7 768.3,583.7 770.6,593.5 772.9,582.1 775.2,592.6 777.5,571.1 779.8,597.7 782.1,586.9 784.4,597.6 786.7,583.6 789.0,592.4 791.3,582.5 793.6,589.8 795.9,589.1 798.2,597.6 800.5,584.2 802.8,595.3 805.1,583.1 807.4,586.9 809.7,583.4 812.0,588.9 814.3,575.8 816.6,590.7 818.9,585.1 821.2,597.1 823.5,590.1 825.8,579.5 828.1,582.7 830.4,594.7 832.7,581.3 835.0,591.4 837.3,584.2 839.6,591.4 841.9,586.8 844.2,589.6 846.5,589.9 848.8,589.5 851.1,581.9 853.4,593.0 855.7,584.1 858.0,596.5 860.3,583.2 862.6,590.7 864.9,585.8 867.2,596.1 869.5,582.2 871.8,595.6 874.1,588.6 876.4,588.8 878.7,581.1" fill="none" stroke="#2b70ad" stroke-width="1.0" stroke-opacity="0.8" stroke-linejoin="round"/>
<polyline points="935.0,586.2 936.5,619.0 938.0,590.9 940.0,589.5 942.3,586.7 944.6,597.4 946.9,590.1 949.2,591.6 951.5,585.8 953.8,594.0 956.1,585.8 958.4,593.5 960.7,581.3 963.0,589.2 965.3,584.9 967.6,595.9 969.9,582.2 972.2,592.5 974.5,584.7 976.8,594.5 979.1,584.6 981.4,595.5 983.7,580.6 986.0,594.6 988.3,580.9 990.6,587.5 992.9,578.4 995.2,591.2 997.5,577.7 999.8,592.0 1002.1,582.7 1004.4,591.0 1006.7,579.4 1009.0,591.9 1011.3,584.0 1013.6,586.1 1015.9,580.4 1018.2,590.0 1020.5,577.7 1022.8,587.9 1025.1,581.7 1027.4,589.2 1029.7,571.6 1032.0,590.1 1034.3,580.4 1036.6,588.7 1038.9,583.6 1041.2,584.4 1043.5,573.1 1045.8,585.3 1048.1,582.1 1050.4,587.9 1052.7,575.8 1055.0,585.1 1057.3,574.5 1059.6,588.6 1061.9,575.6 1064.2,585.0 1066.5,580.9 1068.8,585.5 1071.1,577.2 1073.4,589.5 1076.0,595.6" fill="none" stroke="#2b70ad" stroke-width="1.0" stroke-opacity="0.8" stroke-linejoin="round"/>
</svg>
<div class="a t" style="left:555px;top:333.7px;font-size:13px;color:#444">Latency</div>
<div class="a" style="left:994px;top:328px;width:101px;height:28px;background:#fff;border:1px solid #ccc"></div>
<div class="a" style="left:1072px;top:328px;width:1px;height:28px;background:#ccc"></div>
<div class="a t" style="left:1006px;top:336px;font-size:11px;color:#444">Zoom View</div>
<svg class="a" style="left:1080px;top:341px" width="7" height="4"><path d="M0 0H7L3.5 3.5Z" fill="#222"/></svg>
<div class="a t" style="left:555px;top:506.8px;font-size:13px;letter-spacing:-0.5px;color:#444">IOPS</div>
<div class="a" style="left:994px;top:501px;width:101px;height:28px;background:#fff;border:1px solid #ccc"></div>
<div class="a" style="left:1072px;top:501px;width:1px;height:28px;background:#ccc"></div>
<div class="a t" style="left:1006px;top:509px;font-size:11px;color:#444">Zoom View</div>
<svg class="a" style="left:1080px;top:514px" width="7" height="4"><path d="M0 0H7L3.5 3.5Z" fill="#222"/></svg>
</body></html>
